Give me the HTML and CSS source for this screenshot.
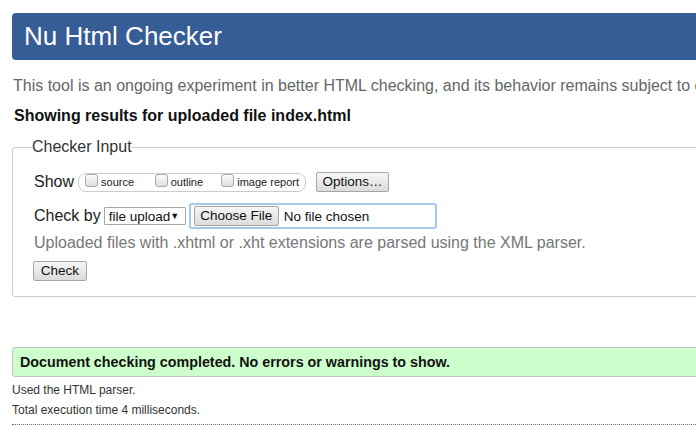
FILE: index.html
```html
<!DOCTYPE html>
<html lang="en">
<head>
<meta charset="utf-8">
<title>Nu Html Checker</title>
<link rel="stylesheet" href="styles.css">
</head>
<body>
<div class="page">
  <h1 class="header">Nu Html Checker</h1>
  <p class="intro">This tool is an ongoing experiment in better HTML checking, and its behavior remains subject to change</p>
  <p class="showing">Showing results for uploaded file index.html</p>
  <fieldset class="checker">
    <legend>Checker Input</legend>
    <div class="row row-show">
      <span class="label">Show</span>
      <span class="pill">
        <label class="opt opt-source"><input type="checkbox" class="cb">source</label>
        <label class="opt opt-outline"><input type="checkbox" class="cb">outline</label>
        <label class="opt opt-image"><input type="checkbox" class="cb">image report</label>
      </span>
      <button class="btn btn-options" type="button">Options…</button>
    </div>
    <div class="row row-check">
      <span class="label">Check by</span>
      <span class="select">file upload <span class="arrow">▼</span></span>
      <span class="file">
        <button class="btn btn-choose" type="button">Choose File</button>
        <span class="nofile">No file chosen</span>
      </span>
    </div>
    <p class="hint">Uploaded files with .xhtml or .xht extensions are parsed using the XML parser.</p>
    <div class="row row-submit">
      <button class="btn btn-check" type="button">Check</button>
    </div>
  </fieldset>
  <div class="success">Document checking completed. No errors or warnings to show.</div>
  <p class="meta">Used the HTML parser.</p>
  <p class="meta">Total execution time 4 milliseconds.</p>
  <div class="rule"></div>
</div>
</body>
</html>
```

FILE: styles.css
```css
html {
  overflow: hidden;
  background: #fff;
}
body {
  margin: 0;
  font-family: "Liberation Sans", Arial, sans-serif;
  color: #222;
}
.page {
  width: 1100px;
  padding: 13px 12px 0 12px;
}
.header {
  margin: 0;
  height: 47px;
  line-height: 47px;
  padding-left: 12px;
  background: #365d95;
  color: #fff;
  font-size: 26px;
  font-weight: normal;
  border-radius: 4px;
}
.intro {
  margin: 16px 0 0 1px;
  font-size: 16px;
  line-height: 20px;
  color: #666;
  white-space: nowrap;
}
.showing {
  margin: 11px 0 0 2px;
  font-size: 16px;
  line-height: 18px;
  font-weight: bold;
  color: #111;
  white-space: nowrap;
}
.checker {
  margin: 13px 0 0 0;
  border: 1px solid #ccc;
  border-radius: 3px;
  padding: 16px 20px 15px 21px;
}
.checker legend {
  padding: 0;
  margin-left: -2px;
  font-size: 16px;
  line-height: 18px;
  color: #333;
}
.row {
  display: flex;
  align-items: center;
  white-space: nowrap;
}
.label {
  font-size: 16px;
  color: #222;
}
.row-show {
  height: 20px;
}
.pill {
  display: flex;
  align-items: center;
  margin-left: 4px;
  height: 17px;
  border: 1px solid #ccc;
  border-radius: 8px;
  padding: 0 6px 0 6px;
  width: 214px;
}
.opt {
  display: flex;
  align-items: center;
  font-size: 11px;
  color: #222;
  white-space: nowrap;
}
.opt-source { width: 70px; }
.opt-outline { width: 67px; }
.cb {
  -webkit-appearance: none;
  appearance: none;
  width: 13px;
  height: 13px;
  margin: -3px 3px 0 0;
  border: 1px solid #aaa;
  border-radius: 3px;
  background: linear-gradient(#fcfcfc, #dedede);
}
.btn {
  font-family: "Liberation Sans", Arial, sans-serif;
  font-size: 13.5px;
  line-height: 18px;
  height: 20px;
  padding: 0;
  border: 1px solid #a6a6a6;
  border-radius: 2px;
  background: linear-gradient(#f6f6f6, #dcdcdc);
  color: #111;
  white-space: nowrap;
}
.btn-options {
  margin-left: 10px;
  width: 73px;
}
.row-check {
  margin-top: 11px;
  height: 26px;
}
.select {
  display: flex;
  align-items: center;
  margin-left: 3px;
  height: 18px;
  width: 82px;
  box-sizing: border-box;
  border: 1px solid #a6a6a6;
  border-radius: 1px;
  font-size: 13.5px;
  padding: 0 6px 0 4px;
  color: #111;
  white-space: nowrap;
}
.arrow {
  font-size: 9px;
  margin-left: auto;
}
.file {
  display: flex;
  align-items: center;
  margin-left: 3px;
  width: 241px;
  height: 22px;
  border: 2px solid #a5c7f0;
  border-radius: 3px;
  padding-left: 3px;
  white-space: nowrap;
}
.btn-choose {
  width: 85px;
}
.nofile {
  margin-left: 5px;
  font-size: 13.5px;
  color: #111;
}
.hint {
  margin: 4px 0 0 0;
  font-size: 16px;
  line-height: 20px;
  color: #777;
  white-space: nowrap;
}
.row-submit {
  margin-top: 8px;
  margin-left: -1px;
}
.btn-check {
  width: 54px;
}
.success {
  margin-top: 50px;
  height: 28px;
  line-height: 28px;
  padding-left: 7px;
  background: #ccffcc;
  border: 1px solid #c4c4c4;
  border-radius: 3px;
  font-size: 14.3px;
  font-weight: bold;
  color: #111;
  white-space: nowrap;
}
.meta {
  margin: 0;
  font-size: 12px;
  line-height: 20px;
  color: #333;
}
.success + .meta {
  margin-top: 3px;
}
.rule {
  margin-top: 4px;
  border-top: 1px dotted #666;
}
```
